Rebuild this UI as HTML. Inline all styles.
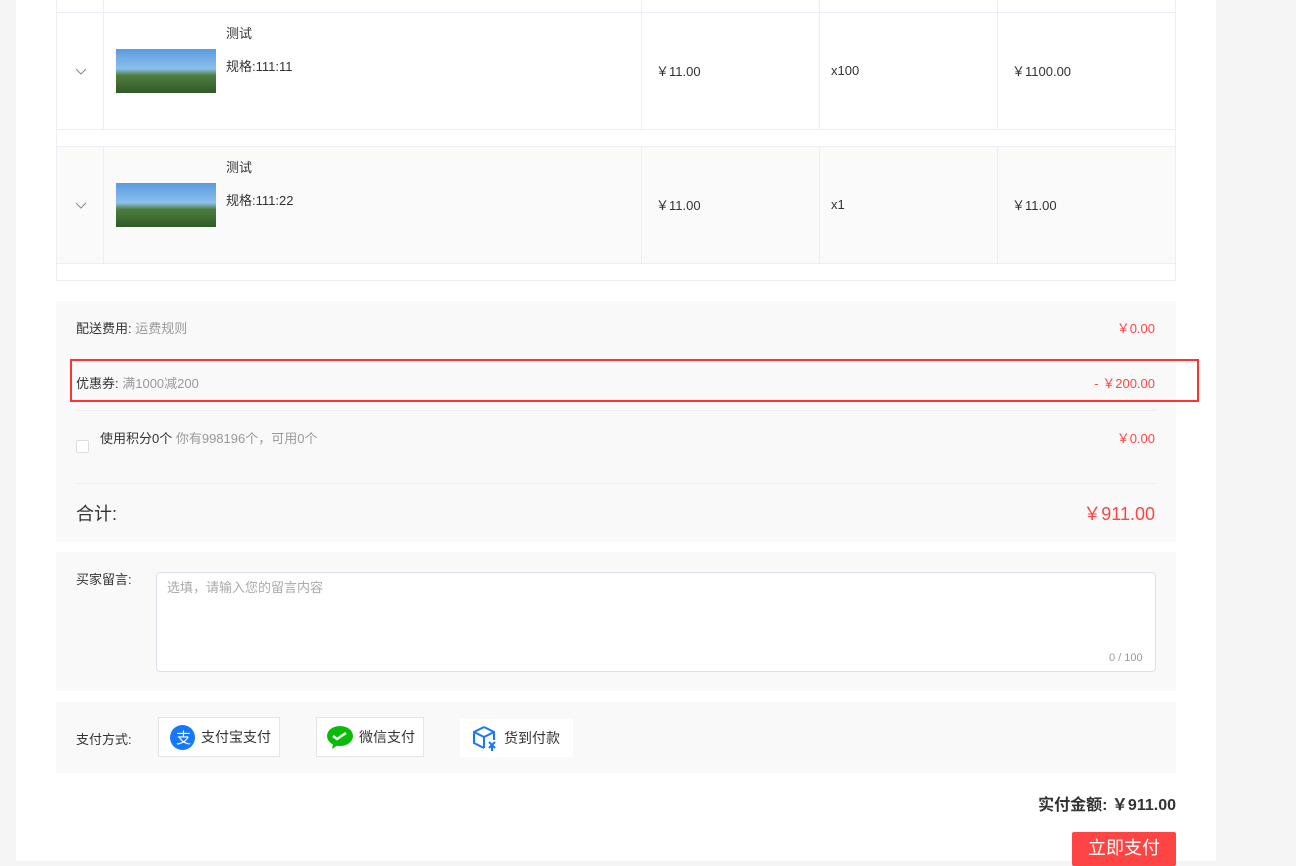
<!DOCTYPE html><html><head><meta charset="utf-8"><style>
*{margin:0;padding:0;box-sizing:border-box}
body{width:1296px;height:861px;overflow:hidden;background:#f5f5f5;font-family:"Liberation Sans","Noto Sans CJK SC",sans-serif;font-size:13px;color:#333;position:relative}
.a{position:absolute}
.main{left:16px;top:0;width:1200px;height:861px;background:#fff}
.l{background:#ebeef5}
.img{width:100px;height:44px;background:linear-gradient(#5a9be0 0%,#8cc0ec 45%,#4f7d3e 60%,#2f5a25 100%)}
.g{color:#999}.r{color:#f44}
.btn{background:#fff;border:1px solid #e5e5e5;height:40px;display:flex;align-items:center;font-size:14px}
</style></head><body>
<div class="a main"></div>
<div class="a" style="left:56px;top:0;width:1120px;height:281px;border:1px solid #ebeef5;border-top:none"></div>
<div class="a" style="left:57px;top:147px;width:1118px;height:117px;background:#fafafa"></div>
<div class="a l" style="left:56px;top:12px;width:1120px;height:1px"></div>
<div class="a l" style="left:56px;top:129px;width:1120px;height:1px"></div>
<div class="a l" style="left:56px;top:146px;width:1120px;height:1px"></div>
<div class="a l" style="left:56px;top:263px;width:1120px;height:1px"></div>
<div class="a l" style="left:103px;top:0;width:1px;height:130px"></div>
<div class="a l" style="left:103px;top:147px;width:1px;height:117px"></div>
<div class="a l" style="left:641px;top:0;width:1px;height:130px"></div>
<div class="a l" style="left:641px;top:147px;width:1px;height:117px"></div>
<div class="a l" style="left:819px;top:0;width:1px;height:130px"></div>
<div class="a l" style="left:819px;top:147px;width:1px;height:117px"></div>
<div class="a l" style="left:997px;top:0;width:1px;height:130px"></div>
<div class="a l" style="left:997px;top:147px;width:1px;height:117px"></div>
<svg class="a" style="left:75px;top:68px" width="12" height="8"><path d="M1 1l5 5 5-5" fill="none" stroke="#888"/></svg>
<svg class="a" style="left:75px;top:202px" width="12" height="8"><path d="M1 1l5 5 5-5" fill="none" stroke="#888"/></svg>
<div class="a img" style="left:116px;top:49px"></div>
<div class="a img" style="left:116px;top:183px"></div>
<div class="a" style="left:226px;top:23px">测试</div>
<div class="a" style="left:226px;top:56px">规格:111:11</div>
<div class="a" style="left:226px;top:157px">测试</div>
<div class="a" style="left:226px;top:190px">规格:111:22</div>
<div class="a" style="left:656px;top:61px">￥11.00</div><div class="a" style="left:831px;top:63px">x100</div><div class="a" style="left:1012px;top:61px">￥1100.00</div>
<div class="a" style="left:656px;top:195px">￥11.00</div><div class="a" style="left:831px;top:197px">x1</div><div class="a" style="left:1012px;top:195px">￥11.00</div>
<div class="a" style="left:56px;top:301px;width:1120px;height:241px;background:#f9f9f9"></div>
<div class="a" style="left:76px;top:318px">配送费用: <span class="g">运费规则</span></div>
<div class="a r" style="right:141px;top:318px">￥0.00</div>
<div class="a" style="left:70px;top:359px;width:1129px;height:43px;border:2px solid #f33"></div>
<div class="a" style="left:76px;top:373px">优惠券: <span class="g">满1000减200</span></div>
<div class="a r" style="right:141px;top:373px">- ￥200.00</div>
<div class="a" style="left:76px;top:410px;width:1080px;height:1px;background:#eee"></div>
<div class="a" style="left:76px;top:440px;width:13px;height:13px;border:1px solid #ddd;background:#fff;border-radius:2px"></div>
<div class="a" style="left:100px;top:428px">使用积分0个 <span class="g">你有998196个，可用0个</span></div>
<div class="a r" style="right:141px;top:428px">￥0.00</div>
<div class="a" style="left:76px;top:483px;width:1080px;height:1px;background:#eee"></div>
<div class="a" style="left:76px;top:500px;font-size:18px">合计:</div>
<div class="a r" style="right:141px;top:500px;font-size:18px">￥911.00</div>
<div class="a" style="left:56px;top:552px;width:1120px;height:139px;background:#f9f9f9"></div>
<div class="a" style="left:76px;top:569px">买家留言:</div>
<div class="a" style="left:156px;top:572px;width:1000px;height:100px;background:#fff;border:1px solid #dcdfe6;border-radius:4px"></div>
<div class="a" style="left:167px;top:577px;color:#aaa">选填，请输入您的留言内容</div>
<div class="a g" style="left:1109px;top:652px;font-size:11px">0 / 100</div>
<div class="a" style="left:56px;top:702px;width:1120px;height:71px;background:#f9f9f9"></div>
<div class="a" style="left:76px;top:729px">支付方式:</div>
<div class="a btn" style="left:158px;top:717px;width:122px;padding-left:11px"><svg width="25" height="25"><circle cx="12.5" cy="12.5" r="12.5" fill="#1677ff"/><text x="6" y="18" fill="#fff" font-size="15">支</text></svg><span style="margin-left:6px">支付宝支付</span></div>
<div class="a btn" style="left:316px;top:717px;width:108px;padding-left:10px"><svg width="26" height="24"><ellipse cx="13" cy="11" rx="13" ry="10" fill="#09bb07"/><path d="M6 19l-1 5 6-4z" fill="#09bb07"/><path d="M6 11l4 3 9-6" fill="none" stroke="#fff" stroke-width="2.5"/></svg><span style="margin-left:6px">微信支付</span></div>
<div class="a btn" style="left:460px;top:719px;width:113px;height:38px;border:none;padding-left:12px"><svg width="26" height="26"><path d="M12 2l10 5v8M12 2L2 7v11l10 5M2 7l10 5 10-5M12 12v11" fill="none" stroke="#1677ff" stroke-width="2"/><path d="M17 17l6 6M23 17l-6 6M20 20v6" stroke="#1677ff" stroke-width="2"/></svg><span style="margin-left:6px">货到付款</span></div>
<div class="a" style="right:120px;top:791px;font-size:16px;font-weight:bold">实付金额: ￥911.00</div>
<div class="a" style="left:1072px;top:832px;width:104px;height:34px;background:#f44;color:#fff;font-size:18px;text-align:center;line-height:32px;border-radius:2px">立即支付</div>
</body></html>
